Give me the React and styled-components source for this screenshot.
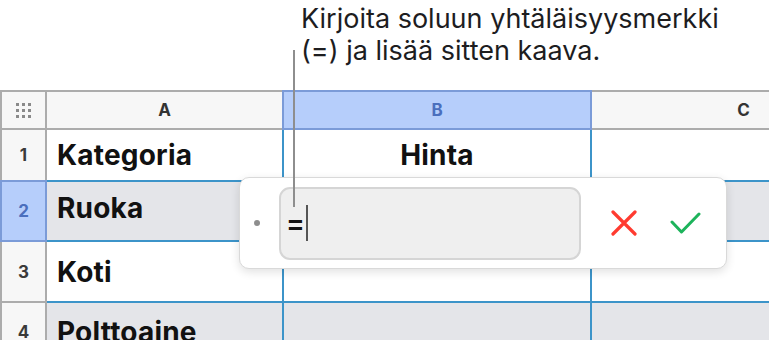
import React from "react";
import styled, { createGlobalStyle } from "styled-components";

const GlobalStyle = createGlobalStyle`
  html, body {
    margin: 0;
    padding: 0;
    background: #ffffff;
    overflow: hidden;
  }
  body {
    font-family: Inter, "Noto Sans", "Liberation Sans", sans-serif;
    color: #1c1c1e;
  }
`;

const GRAY = "#acacac";
const BLUE_LINE = "#3c94c9";
const SEL_BORDER = "#7b9bd8";
const SEL_BG = "#b6cefb";

const Page = styled.div`
  position: relative;
  width: 769px;
  height: 340px;
  overflow: hidden;
  background: #ffffff;
`;

const Caption = styled.div`
  box-sizing: border-box;
  height: 90px;
  padding: 3px 0 0 301px;
  font-size: 27px;
  line-height: 32px;
  font-weight: 400;
  color: #1d1d1f;
`;

const Leader = styled.div`
  position: absolute;
  left: 293px;
  top: 50px;
  width: 2px;
  height: 157px;
  background: #8e8e8e;
  z-index: 3;
`;

const Sheet = styled.div`
  display: grid;
  grid-template-columns: 47px 237px 308px 305px;
  grid-template-rows: 40px 52px 60px 61px 60px;
`;

const Corner = styled.div`
  box-sizing: border-box;
  border: 2px solid ${GRAY};
  background: #f7f7f7;
  display: flex;
  align-items: center;
  justify-content: center;
`;

const Dots = styled.div`
  display: grid;
  grid-template-columns: repeat(3, 3px);
  grid-template-rows: repeat(3, 3px);
  gap: 3px;
  span {
    background: #8a8a8a;
  }
`;

const ColHead = styled.div`
  box-sizing: border-box;
  border-top: 2px solid ${(p) => (p.$selected ? SEL_BORDER : GRAY)};
  border-right: 2px solid ${(p) => (p.$selected ? SEL_BORDER : GRAY)};
  border-bottom: 2px solid ${(p) => (p.$selected ? SEL_BORDER : GRAY)};
  box-shadow: ${(p) => (p.$selected ? `-2px 0 0 ${SEL_BORDER}` : "none")};
  background: ${(p) => (p.$selected ? SEL_BG : "#f7f7f7")};
  color: ${(p) => (p.$selected ? "#4a6fbd" : "#333333")};
  font-size: 17px;
  font-weight: 700;
  display: flex;
  align-items: center;
  justify-content: center;
`;

const RowHead = styled.div`
  box-sizing: border-box;
  border-left: 2px solid ${(p) => (p.$selected ? SEL_BORDER : GRAY)};
  border-right: 2px solid ${(p) => (p.$selected ? SEL_BORDER : GRAY)};
  border-bottom: 2px solid ${(p) => (p.$selected ? SEL_BORDER : GRAY)};
  box-shadow: ${(p) => (p.$selected ? `0 -2px 0 ${SEL_BORDER}` : "none")};
  background: ${(p) => (p.$selected ? SEL_BG : "#f7f7f7")};
  color: ${(p) => (p.$selected ? "#4a6fbd" : "#3a3a3a")};
  font-size: 17px;
  font-weight: 700;
  display: flex;
  align-items: center;
  justify-content: center;
`;

const Cell = styled.div`
  box-sizing: border-box;
  border-right: 2px solid ${BLUE_LINE};
  border-bottom: 2px solid ${BLUE_LINE};
  background: ${(p) => (p.$shaded ? "#e4e5e9" : "#ffffff")};
  padding: ${(p) => (p.$raised ? "0 10px 6px" : "0 10px")};
  font-size: 28px;
  font-weight: 700;
  letter-spacing: 0.2px;
  color: #111111;
  display: flex;
  align-items: center;
  justify-content: ${(p) => (p.$center ? "center" : "flex-start")};
  white-space: nowrap;
`;

const Popover = styled.div`
  position: absolute;
  left: 239px;
  top: 177px;
  width: 488px;
  height: 92px;
  box-sizing: border-box;
  background: #ffffff;
  border: 1px solid #d9d9d9;
  border-radius: 10px;
  box-shadow: 0 3px 10px rgba(0, 0, 0, 0.12);
  display: flex;
  align-items: center;
  z-index: 2;
`;

const Bullet = styled.div`
  width: 6px;
  height: 6px;
  border-radius: 50%;
  background: #8d8d8d;
  margin-left: 14px;
`;

const FormulaField = styled.div`
  box-sizing: border-box;
  width: 302px;
  height: 73px;
  margin-left: 19px;
  background: #efefef;
  border: 2px solid #d5d5d5;
  border-radius: 11px;
  display: flex;
  align-items: center;
  padding-left: 5px;
  font-size: 28px;
  font-weight: 600;
  color: #111111;
`;

const Caret = styled.span`
  display: inline-block;
  width: 2px;
  height: 36px;
  margin-left: 1px;
  background: #555555;
`;

const ActionButton = styled.button`
  border: 0;
  background: none;
  padding: 0;
  margin-left: ${(p) => p.$gap}px;
  display: flex;
  align-items: center;
  justify-content: center;
  cursor: pointer;
`;

const dots = Array.from({ length: 9 });

const rows = [
  { n: 1, a: "Kategoria", b: "Hinta", shaded: false },
  { n: 2, a: "Ruoka", b: "", shaded: true, selected: true },
  { n: 3, a: "Koti", b: "", shaded: false },
  { n: 4, a: "Polttoaine", b: "", shaded: true },
];

export default function App() {
  return (
    <>
      <GlobalStyle />
      <Page>
        <Caption>
          Kirjoita soluun yhtäläisyysmerkki
          <br />
          (=) ja lisää sitten kaava.
        </Caption>
        <Leader />
        <Sheet>
          <Corner>
            <Dots>
              {dots.map((_, i) => (
                <span key={i} />
              ))}
            </Dots>
          </Corner>
          <ColHead>A</ColHead>
          <ColHead $selected>B</ColHead>
          <ColHead>C</ColHead>
          {rows.map((r) => (
            <React.Fragment key={r.n}>
              <RowHead $selected={r.selected}>{r.n}</RowHead>
              <Cell $shaded={r.shaded} $raised={r.selected}>
                {r.a}
              </Cell>
              <Cell $shaded={r.shaded} $center>
                {r.b}
              </Cell>
              <Cell $shaded={r.shaded} />
            </React.Fragment>
          ))}
        </Sheet>
        <Popover>
          <Bullet />
          <FormulaField>
            =<Caret />
          </FormulaField>
          <ActionButton $gap={30} aria-label="Peruuta">
            <svg width="26" height="26" viewBox="0 0 26 26">
              <path
                d="M2 2 L24 24 M24 2 L2 24"
                stroke="#ff3b30"
                strokeWidth="3.2"
                strokeLinecap="round"
                fill="none"
              />
            </svg>
          </ActionButton>
          <ActionButton $gap={33} aria-label="Hyväksy">
            <svg width="31" height="22" viewBox="0 0 31 22">
              <path
                d="M2 10 L11.5 20 L29 2"
                stroke="#1db35b"
                strokeWidth="3"
                strokeLinecap="round"
                strokeLinejoin="round"
                fill="none"
              />
            </svg>
          </ActionButton>
        </Popover>
      </Page>
    </>
  );
}
